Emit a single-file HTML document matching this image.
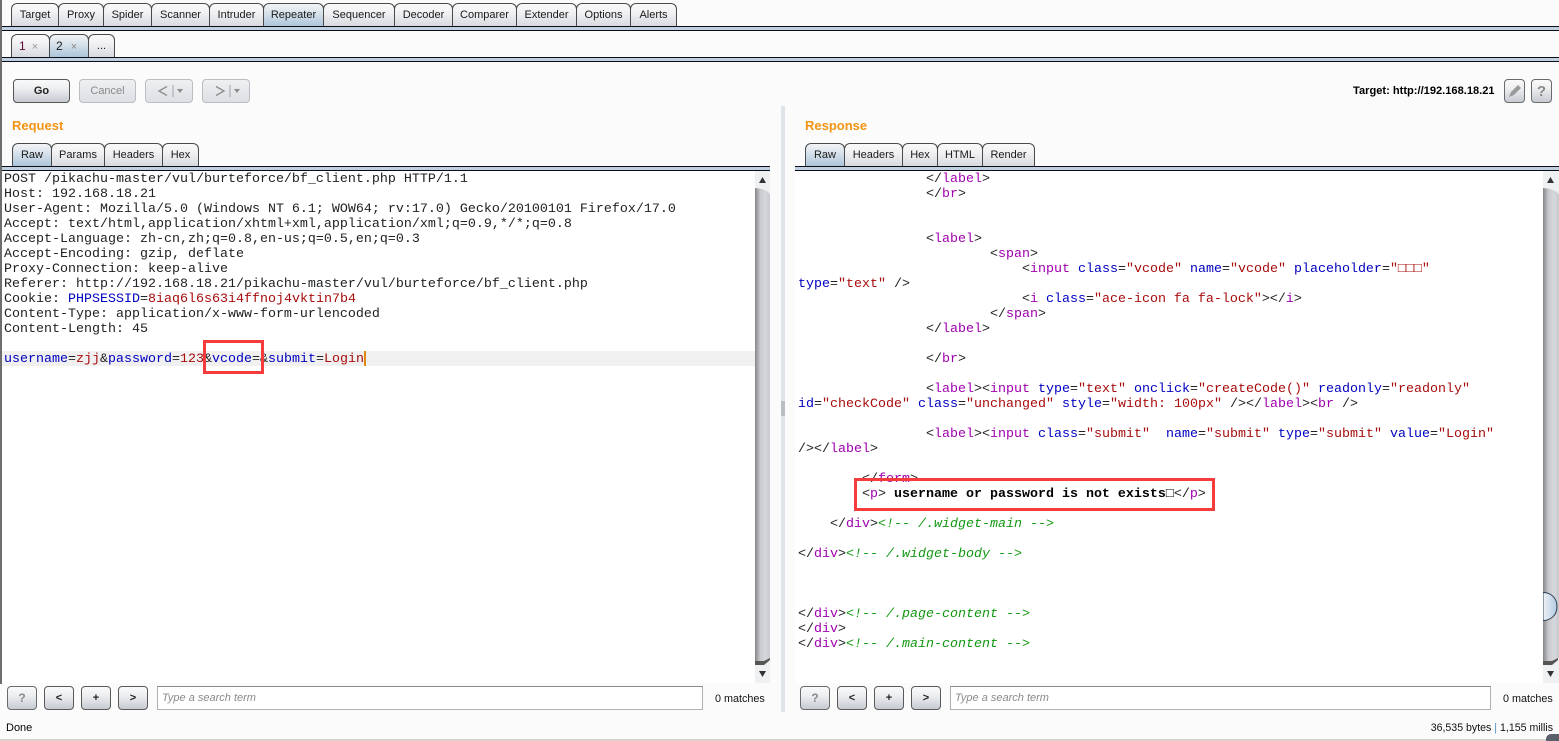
<!DOCTYPE html>
<html>
<head>
<meta charset="utf-8">
<style>
html,body{margin:0;padding:0;}
body{position:relative;width:1559px;height:741px;overflow:hidden;background:#fbfbfb;font-family:"Liberation Sans",sans-serif;font-size:12px;color:#111;}
.a{position:absolute;box-sizing:border-box;}
.tab{position:absolute;box-sizing:border-box;height:24px;border:1px solid #4a4a4a;border-bottom:none;border-radius:6px 6px 0 0;background:linear-gradient(#fafafa,#f2f2f4 35%,#d6d8de);text-align:center;line-height:23px;font-size:11px;color:#1a1a1a;white-space:nowrap;}
.on{background:linear-gradient(#f2f4f6,#dbe4ec 35%,#a9c3da);}
.line{position:absolute;box-sizing:border-box;border-top:1px solid #0c0c14;border-bottom:1px solid #0c0c14;background:#bfd0e2;height:5px;}
.btn{position:absolute;box-sizing:border-box;height:24px;border:1px solid #5a5a5a;border-radius:4px;background:linear-gradient(#fafafa,#eceef0 40%,#c6cad2);text-align:center;line-height:23px;font-size:11px;font-weight:bold;color:#222;}
.dis{border-color:#bbbdc2;background:linear-gradient(#eef0f2,#dcdfe4);color:#8a8a8a;font-weight:normal;}
.grey{border-color:#6a6a6a;color:#8a8a8a;font-size:13px;}
pre{position:absolute;margin:0;font-family:"Liberation Mono",monospace;font-size:13.33px;line-height:15px;color:#222;white-space:pre;}
.b{color:#0000c0}.r{color:#a80c0c}.p{color:#a000b0}.g{color:#119911;font-style:italic}.k{color:#000;font-weight:bold}
.h{position:absolute;font-weight:bold;font-size:13px;color:#f39414;line-height:16px;}
.sb{position:absolute;width:15px;}
.input{position:absolute;box-sizing:border-box;height:24px;background:#fff;border:1px solid #b0b0b0;border-top:1px solid #8a8a8a;padding-left:4px;line-height:23px;font-size:11px;font-style:italic;color:#8a8a8a;}
.t{position:absolute;line-height:14px;font-size:11px;color:#111;white-space:nowrap;}
</style>
</head>
<body>
<div class="a" style="left:0;top:0;width:2px;height:684px;background:#6e6e6e"></div>

<div class="tab" style="left:11px;top:3px;width:48px">Target</div>
<div class="tab" style="left:58px;top:3px;width:46px">Proxy</div>
<div class="tab" style="left:103px;top:3px;width:49px">Spider</div>
<div class="tab" style="left:151px;top:3px;width:59px">Scanner</div>
<div class="tab" style="left:209px;top:3px;width:55px">Intruder</div>
<div class="tab on" style="left:263px;top:3px;width:61px">Repeater</div>
<div class="tab" style="left:323px;top:3px;width:72px">Sequencer</div>
<div class="tab" style="left:394px;top:3px;width:59px">Decoder</div>
<div class="tab" style="left:452px;top:3px;width:65px">Comparer</div>
<div class="tab" style="left:516px;top:3px;width:61px">Extender</div>
<div class="tab" style="left:576px;top:3px;width:55px">Options</div>
<div class="tab" style="left:630px;top:3px;width:47px">Alerts</div>
<div class="line" style="left:2px;top:26px;width:1557px"></div>

<div class="tab" style="left:11px;top:34px;width:39px;text-align:left;padding-left:7px"><span style="color:#5a0a3a;font-size:12px">1</span> <span style="color:#999;margin-left:3px;font-size:11px">×</span></div>
<div class="tab on" style="left:49px;top:34px;width:40px;text-align:left;padding-left:6px"><span style="font-size:12px">2</span> <span style="color:#888;margin-left:5px;font-size:11px">×</span></div>
<div class="tab" style="left:88px;top:34px;width:27px">...</div>
<div class="line" style="left:2px;top:57px;width:1557px"></div>

<div class="btn" style="left:13px;top:79px;width:57px;font-size:11px;border-color:#555">Go</div>
<div class="btn dis" style="left:79px;top:79px;width:57px;font-size:11px">Cancel</div>
<div class="btn dis" style="left:145px;top:79px;width:48px"><svg width="46" height="22" style="position:absolute;left:0;top:0"><path d="M21 6.5 L13 11 L21 15.5" fill="none" stroke="#8d8d8d" stroke-width="1.3"/><path d="M27 5V17" stroke="#a5a5a5"/><path d="M31 9H37L34 13Z" fill="#8d8d8d"/></svg></div>
<div class="btn dis" style="left:202px;top:79px;width:48px"><svg width="46" height="22" style="position:absolute;left:0;top:0"><path d="M13 6.5 L21 11 L13 15.5" fill="none" stroke="#8d8d8d" stroke-width="1.3"/><path d="M27 5V17" stroke="#a5a5a5"/><path d="M31 9H37L34 13Z" fill="#8d8d8d"/></svg></div>

<div class="t" style="left:1353px;top:84px;font-weight:bold;font-size:11.1px;color:#000">Target: http://192.168.18.21</div>
<div class="btn grey" style="left:1504px;top:79px;width:21px"><svg width="19" height="22" style="position:absolute;left:0;top:0"><path d="M4 17 L6 12 L13 5 L16 8 L9 15 Z" fill="#9a9a9a"/></svg></div>
<div class="btn grey" style="left:1531px;top:79px;width:21px;font-size:15px">?</div>

<div class="a" style="left:781px;top:106px;width:4px;height:606px;background:#dfe3ea"></div>
<div class="a" style="left:781px;top:401px;width:4px;height:15px;background:#b9bdc4"></div>

<div class="h" style="left:12px;top:118px">Request</div>
<div class="tab on" style="left:12px;top:143px;width:40px">Raw</div>
<div class="tab" style="left:51px;top:143px;width:54px">Params</div>
<div class="tab" style="left:104px;top:143px;width:59px">Headers</div>
<div class="tab" style="left:162px;top:143px;width:37px">Hex</div>
<div class="line" style="left:2px;top:166px;width:768px"></div>

<div class="h" style="left:805px;top:118px">Response</div>
<div class="tab on" style="left:805px;top:143px;width:40px">Raw</div>
<div class="tab" style="left:844px;top:143px;width:59px">Headers</div>
<div class="tab" style="left:902px;top:143px;width:36px">Hex</div>
<div class="tab" style="left:937px;top:143px;width:46px">HTML</div>
<div class="tab" style="left:982px;top:143px;width:53px">Render</div>
<div class="line" style="left:795px;top:166px;width:764px"></div>

<!-- request editor -->
<div class="a" style="left:2px;top:171px;width:753px;height:512px;background:#fff"></div>
<div class="a" style="left:2px;top:351px;width:753px;height:15px;background:#f0f0f0"></div>
<pre style="left:4px;top:172px">POST /pikachu-master/vul/burteforce/bf_client.php HTTP/1.1
Host: 192.168.18.21
User-Agent: Mozilla/5.0 (Windows NT 6.1; WOW64; rv:17.0) Gecko/20100101 Firefox/17.0
Accept: text/html,application/xhtml+xml,application/xml;q=0.9,*/*;q=0.8
Accept-Language: zh-cn,zh;q=0.8,en-us;q=0.5,en;q=0.3
Accept-Encoding: gzip, deflate
Proxy-Connection: keep-alive
Referer: http://192.168.18.21/pikachu-master/vul/burteforce/bf_client.php
Cookie: <span class="b">PHPSESSID</span>=<span class="r">8iaq6l6s63i4ffnoj4vktin7b4</span>
Content-Type: application/x-www-form-urlencoded
Content-Length: 45

<span class="b">username</span>=<span class="r">zjj</span>&amp;<span class="b">password</span>=<span class="r">123</span>&amp;<span class="b">vcode</span>=&amp;<span class="b">submit</span>=<span class="r">Login</span></pre>
<div class="a" style="left:364px;top:351px;width:2px;height:15px;background:#e08a10"></div>
<div class="a" style="left:203px;top:340px;width:61px;height:34px;border:3px solid #f43c3c"></div>

<!-- response editor -->
<div class="a" style="left:795px;top:171px;width:748px;height:512px;background:#fff"></div>
<pre style="left:798px;top:172px">                &lt;/<span class="p">label</span>&gt;
                &lt;/<span class="p">br</span>&gt;


                &lt;<span class="p">label</span>&gt;
                        &lt;<span class="p">span</span>&gt;
                            &lt;<span class="p">input</span> <span class="b">class</span>=<span class="r">"vcode"</span> <span class="b">name</span>=<span class="r">"vcode"</span> <span class="b">placeholder</span>=<span class="r">"□□□"</span>
<span class="b">type</span>=<span class="r">"text"</span> /&gt;
                            &lt;<span class="p">i</span> <span class="b">class</span>=<span class="r">"ace-icon fa fa-lock"</span>&gt;&lt;/<span class="p">i</span>&gt;
                        &lt;/<span class="p">span</span>&gt;
                &lt;/<span class="p">label</span>&gt;

                &lt;/<span class="p">br</span>&gt;

                &lt;<span class="p">label</span>&gt;&lt;<span class="p">input</span> <span class="b">type</span>=<span class="r">"text"</span> <span class="b">onclick</span>=<span class="r">"createCode()"</span> <span class="b">readonly</span>=<span class="r">"readonly"</span>
<span class="b">id</span>=<span class="r">"checkCode"</span> <span class="b">class</span>=<span class="r">"unchanged"</span> <span class="b">style</span>=<span class="r">"width: 100px"</span> /&gt;&lt;/<span class="p">label</span>&gt;&lt;<span class="p">br</span> /&gt;

                &lt;<span class="p">label</span>&gt;&lt;<span class="p">input</span> <span class="b">class</span>=<span class="r">"submit"</span>  <span class="b">name</span>=<span class="r">"submit"</span> <span class="b">type</span>=<span class="r">"submit"</span> <span class="b">value</span>=<span class="r">"Login"</span>
/&gt;&lt;/<span class="p">label</span>&gt;

        &lt;/<span class="p">form</span>&gt;
        &lt;<span class="p">p</span>&gt; <span class="k">username or password is not exists□</span>&lt;/<span class="p">p</span>&gt;

    &lt;/<span class="p">div</span>&gt;<span class="g">&lt;!-- /.widget-main --&gt;</span>

&lt;/<span class="p">div</span>&gt;<span class="g">&lt;!-- /.widget-body --&gt;</span>



&lt;/<span class="p">div</span>&gt;<span class="g">&lt;!-- /.page-content --&gt;</span>
&lt;/<span class="p">div</span>&gt;
&lt;/<span class="p">div</span>&gt;<span class="g">&lt;!-- /.main-content --&gt;</span></pre>
<div class="a" style="left:854px;top:478px;width:361px;height:33px;border:3px solid #f43c3c"></div>

<!-- left scrollbar -->
<div class="sb" style="left:755px;top:171px;height:512px;background:linear-gradient(90deg,#858585,#c8cacf 35%,#d6d8dc 70%,#c6c8cd)"></div>
<svg class="a" style="left:755px;top:171px" width="15" height="24"><path d="M0 0H15V24C14 21 11 18 0 17Z" fill="#eef0f2"/><path d="M4 12L7.5 6L11 12Z" fill="#333"/></svg>
<svg class="a" style="left:755px;top:658px" width="15" height="25"><path d="M0 7H9L15 0V25H0Z" fill="#eef0f2"/><path d="M0 3H9L15 0V2L9 7H0Z" fill="#555"/><path d="M4 13L7.5 19L11 13Z" fill="#333"/></svg>

<!-- right scrollbar -->
<div class="sb" style="left:1543px;top:171px;height:512px;width:16px;background:linear-gradient(90deg,#858585,#c8cacf 35%,#d6d8dc 70%,#c6c8cd)"></div>
<svg class="a" style="left:1543px;top:171px" width="16" height="24"><path d="M0 0H16V24C15 21 11 18 0 17Z" fill="#eef0f2"/><path d="M4 12L7.5 6L11 12Z" fill="#333"/></svg>
<svg class="a" style="left:1543px;top:658px" width="16" height="25"><path d="M0 7H9L15 0H16V25H0Z" fill="#eef0f2"/><path d="M0 3H9L15 0V2L9 7H0Z" fill="#555"/><path d="M4 13L7.5 19L11 13Z" fill="#333"/></svg>
<svg class="a" style="left:1543px;top:591px" width="16" height="31"><defs><linearGradient id="th" x1="0" x2="1" y1="0" y2="0"><stop offset="0" stop-color="#eef2f6"/><stop offset="1" stop-color="#b3cbe2"/></linearGradient></defs><path d="M0 1.5C8 1.5 14 7 14 15.5C14 24 8 29.5 0 29.5Z" fill="url(#th)" stroke="#2f3d52"/></svg>

<!-- search bars -->
<div class="btn grey" style="left:7px;top:686px;width:30px;font-size:12px">?</div>
<div class="btn" style="left:44px;top:686px;width:30px">&lt;</div>
<div class="btn" style="left:81px;top:686px;width:30px">+</div>
<div class="btn" style="left:118px;top:686px;width:30px">&gt;</div>
<div class="input" style="left:157px;top:686px;width:546px">Type a search term</div>
<div class="t" style="left:715px;top:692px;font-size:10.8px">0 matches</div>

<div class="btn grey" style="left:800px;top:686px;width:30px;font-size:12px">?</div>
<div class="btn" style="left:837px;top:686px;width:30px">&lt;</div>
<div class="btn" style="left:874px;top:686px;width:30px">+</div>
<div class="btn" style="left:911px;top:686px;width:30px">&gt;</div>
<div class="input" style="left:950px;top:686px;width:541px">Type a search term</div>
<div class="t" style="left:1503px;top:692px;font-size:10.8px">0 matches</div>

<!-- status -->
<div class="t" style="left:6px;top:721px;color:#000">Done</div>
<div class="t" style="right:6px;top:721px;color:#111;font-size:10.6px">36,535 bytes <span style="color:#4a90d0">|</span> 1,155 millis</div>
<div class="a" style="left:0;top:739px;width:1559px;height:2px;background:#d6d2ca"></div>
<div class="a" style="left:1546px;top:734px;width:13px;height:7px;background:#59606c;border-radius:5px 0 0 0"></div>
</body>
</html>
